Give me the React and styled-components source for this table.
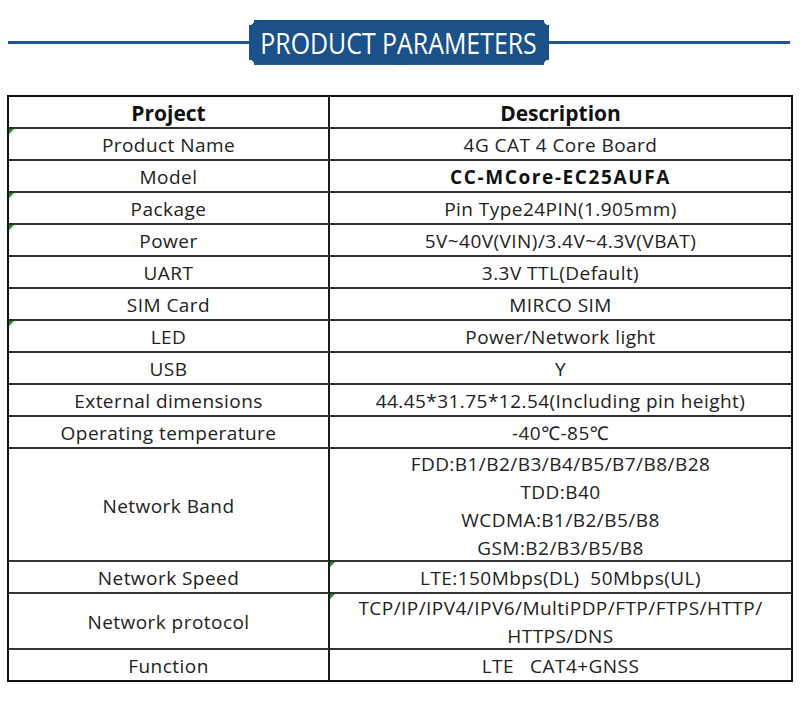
import React from 'react'
import styled, { createGlobalStyle, css } from 'styled-components'

const GlobalStyle = createGlobalStyle`
  html, body {
    margin: 0;
    padding: 0;
    background: #fff;
  }
  body {
    font-family: "Open Sans", "Noto Sans", "Liberation Sans", sans-serif;
    color: #222;
  }
`

const Page = styled.div`
  width: 800px;
  padding-top: 20px;
  padding-bottom: 20px;
`

const TitleBar = styled.div`
  display: flex;
  align-items: center;
  padding: 0 10px 0 8px;
  height: 45px;
`

const Rule = styled.div`
  flex: 1;
  height: 3px;
  background: #23568f;
`

const Badge = styled.div`
  width: 300px;
  height: 45px;
  display: flex;
  align-items: center;
  justify-content: center;
  background:
    radial-gradient(circle at 0 0, transparent 5px, #1b5189 5.5px) top left / 51% 51% no-repeat,
    radial-gradient(circle at 100% 0, transparent 5px, #1b5189 5.5px) top right / 51% 51% no-repeat,
    radial-gradient(circle at 0 100%, transparent 5px, #1b5189 5.5px) bottom left / 51% 51% no-repeat,
    radial-gradient(circle at 100% 100%, transparent 5px, #1b5189 5.5px) bottom right / 51% 51% no-repeat;
`

const BadgeText = styled.span`
  display: inline-block;
  color: #fff;
  font-family: "Open Sans", "Liberation Sans", sans-serif;
  font-size: 30px;
  font-weight: 400;
  white-space: nowrap;
  transform: scaleX(0.83);
`

const Table = styled.div`
  margin: 30px 7px 0 7px;
  border: 2px solid #111;
  display: grid;
  grid-template-columns: 321px 1fr;
`

const Cell = styled.div`
  position: relative;
  box-sizing: border-box;
  height: ${({ h }) => h || 32}px;
  padding-top: 2px;
  display: flex;
  flex-direction: column;
  align-items: center;
  justify-content: center;
  text-align: center;
  font-size: 19px;
  line-height: 28px;
  letter-spacing: 0.45px;
  color: #222;
  border-bottom: ${({ last }) => (last ? 'none' : '2px solid #333')};
  ${({ left }) => left && css`
    border-right: 2px solid #1a1a1a;
  `}
  ${({ head }) => head && css`
    font-weight: 700;
    font-size: 21px;
    letter-spacing: 0;
    color: #111;
  `}
  ${({ strong }) => strong && css`
    font-weight: 700;
    letter-spacing: 1.6px;
    color: #111;
  `}
  ${({ marked }) => marked && css`
    &::before {
      content: '';
      position: absolute;
      top: 0;
      left: 0;
      border-top: 5px solid #1f8a2a;
      border-right: 5px solid transparent;
    }
  `}
`

const rows = [
  { name: 'Product Name', value: ['4G CAT 4 Core Board'], markName: true },
  { name: 'Model', value: ['CC-MCore-EC25AUFA'], strong: true },
  { name: 'Package', value: ['Pin Type24PIN(1.905mm)'], markName: true },
  { name: 'Power', value: ['5V~40V(VIN)/3.4V~4.3V(VBAT)'], markName: true },
  { name: 'UART', value: ['3.3V TTL(Default)'] },
  { name: 'SIM Card', value: ['MIRCO SIM'] },
  { name: 'LED', value: ['Power/Network light'], markName: true },
  { name: 'USB', value: ['Y'] },
  { name: 'External dimensions', value: ['44.45*31.75*12.54(Including pin height)'] },
  { name: 'Operating temperature', value: ['-40\u2103-85\u2103'] },
  {
    name: 'Network Band',
    value: ['FDD:B1/B2/B3/B4/B5/B7/B8/B28', 'TDD:B40', 'WCDMA:B1/B2/B5/B8', 'GSM:B2/B3/B5/B8'],
    h: 113,
  },
  { name: 'Network Speed', value: ['LTE:150Mbps(DL)\u00a0\u00a050Mbps(UL)'], markValue: true },
  {
    name: 'Network protocol',
    value: ['TCP/IP/IPV4/IPV6/MultiPDP/FTP/FTPS/HTTP/', 'HTTPS/DNS'],
    h: 56,
    markValue: true,
  },
  { name: 'Function', value: ['LTE\u00a0\u00a0\u00a0CAT4+GNSS'], h: 30, last: true },
]

const App = () => (
  <Page>
    <GlobalStyle />
    <TitleBar>
      <Rule />
      <Badge>
        <BadgeText>PRODUCT PARAMETERS</BadgeText>
      </Badge>
      <Rule />
    </TitleBar>
    <Table>
      <Cell left head>Project</Cell>
      <Cell head>Description</Cell>
      {rows.map((r) => (
        <React.Fragment key={r.name}>
          <Cell left h={r.h} last={r.last} marked={r.markName}>{r.name}</Cell>
          <Cell h={r.h} last={r.last} marked={r.markValue} strong={r.strong}>
            {r.value.map((line) => <span key={line}>{line}</span>)}
          </Cell>
        </React.Fragment>
      ))}
    </Table>
  </Page>
)

export default App
